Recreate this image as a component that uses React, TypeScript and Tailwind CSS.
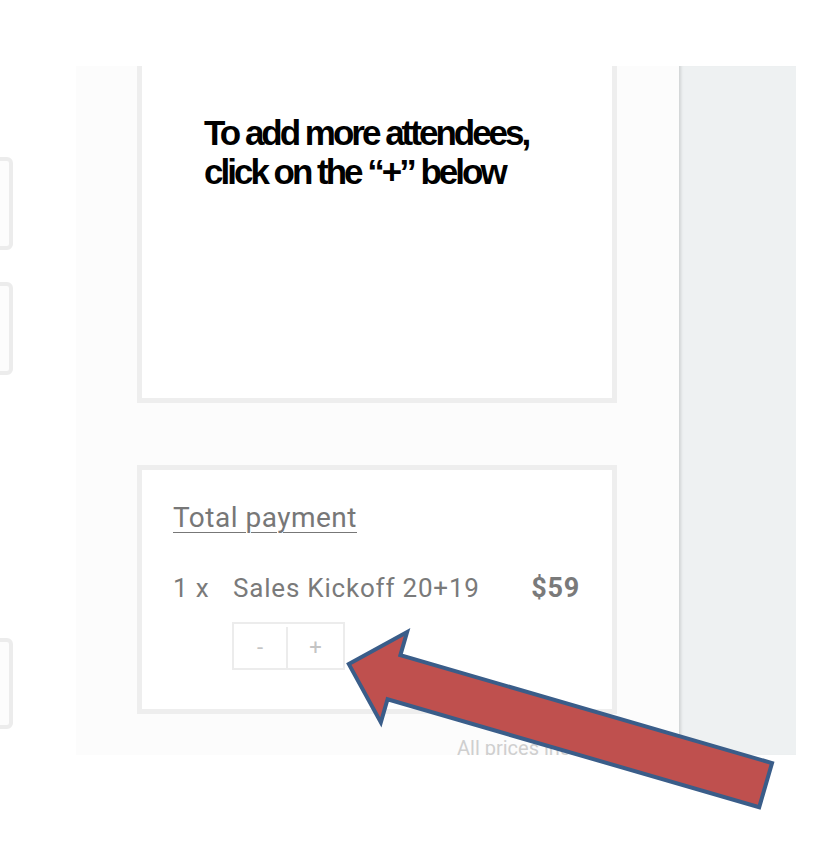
import React from 'react';

// Arrow drawn in its own frame: tip at the origin, pointing left
const arrowPoints = '4,0 51,-47 51,-23 438,-23 438,23 51,23 51,47';

function SideCard({ className }: { className: string }) {
  return (
    <div
      className={`w-[100px] -ml-[87px] rounded-[6px] border-4 border-[#ececec] bg-[#fcfcfc] ${className}`}
    />
  );
}

export default function App() {
  return (
    <div className="relative w-[818px] h-[856px] overflow-hidden bg-white font-['Roboto',sans-serif]">
      <div className="mt-[66px] flex h-[689px] w-[796px] overflow-hidden">
        {/* left column, mostly off screen */}
        <div className="flex w-[76px] shrink-0 flex-col bg-white">
          <SideCard className="mt-[91px] h-[93px]" />
          <SideCard className="mt-[32px] h-[93px]" />
          <SideCard className="mt-[263px] h-[91px]" />
        </div>

        {/* middle panel */}
        <div className="flex w-[603px] shrink-0 flex-col bg-[#fcfcfc] pl-[61px]">
          <div className="-mt-[30px] h-[367px] w-[480px] shrink-0 border-[5px] border-[#eeeeee] bg-white pl-[62px] pt-[72px]">
            <p className="font-['Liberation_Sans',Arial,sans-serif] text-[35px] font-bold leading-[39px] tracking-[-3px] text-black">
              To add more attendees,
              <br />
              click on the “+” below
            </p>
          </div>

          <div className="mt-[62px] h-[249px] w-[480px] shrink-0 border-[5px] border-[#eeeeee] bg-white pl-[31px] pr-[32px] pt-[31px]">
            <p className="text-[28px] leading-[34px] tracking-[0.5px] text-[#777777] underline decoration-1 underline-offset-[5px]">
              Total payment
            </p>
            <div className="mt-[37px] flex items-center text-[26px] leading-[32px] tracking-[0.8px] text-[#7a7a7a]">
              <span className="w-[60px]">1 x</span>
              <span>Sales Kickoff 20+19</span>
              <span className="ml-auto text-[27px] font-bold">$59</span>
            </div>
            <div className="ml-[59px] mt-[18px] flex h-[48px] w-fit border-2 border-[#ececec] pt-[3px] text-[22px] text-[#c4c4c4]">
              <button className="flex w-[54px] items-center justify-center border-r-2 border-[#ececec]">-</button>
              <button className="flex w-[55px] items-center justify-center">+</button>
            </div>
          </div>

          <p className="ml-[320px] mt-[22px] whitespace-nowrap text-[20px] leading-[24px] text-[#cfcfcf]">
            All prices include VAT
          </p>
        </div>

        {/* right side panel */}
        <div className="w-[117px] shrink-0 bg-[#eef1f2] shadow-[inset_4px_0_3px_-2px_rgba(0,0,0,0.12)]" />
      </div>

      {/* annotation arrow */}
      <svg className="absolute left-0 top-0" width="818" height="856" viewBox="0 0 818 856">
        <polygon
          points={arrowPoints}
          transform="translate(345 663) rotate(16.2)"
          fill="#bf504e"
          stroke="#3a5d89"
          strokeWidth="4"
          strokeLinejoin="miter"
        />
      </svg>
    </div>
  );
}
